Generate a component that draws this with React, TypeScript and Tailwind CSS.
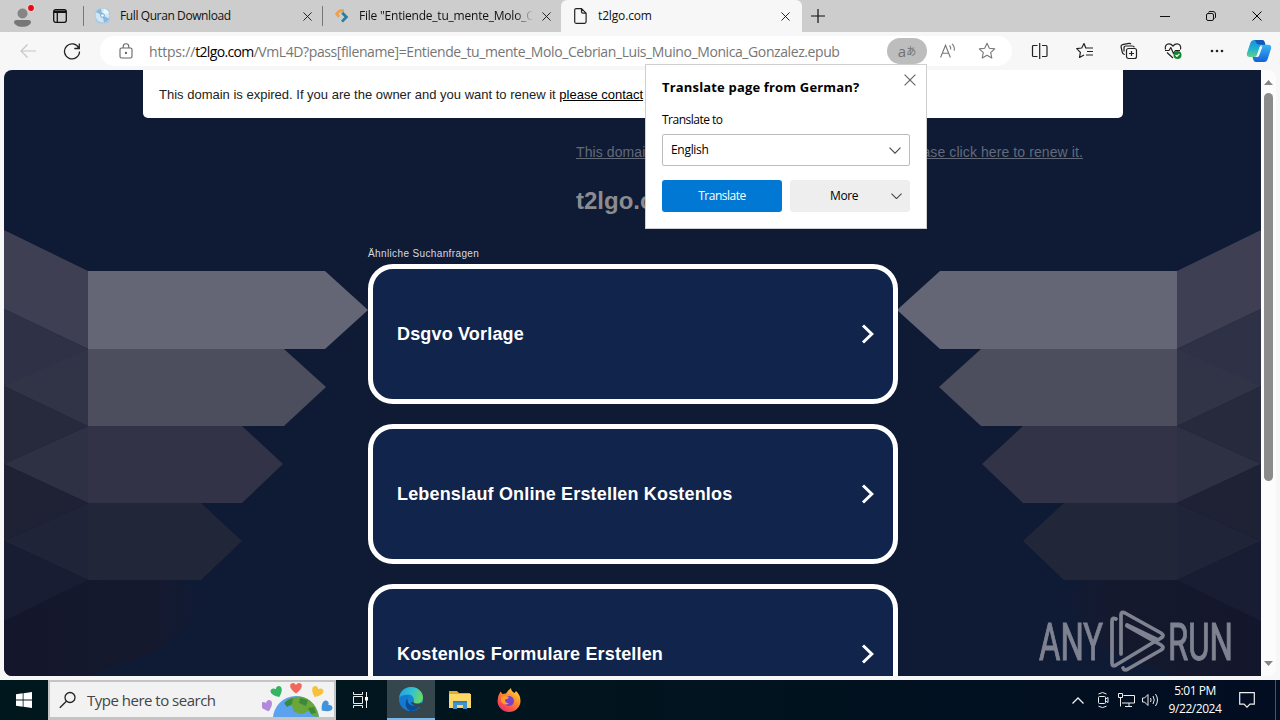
import type { ReactNode } from 'react'
import clsx from 'clsx'

const related = ['Dsgvo Vorlage', 'Lebenslauf Online Erstellen Kostenlos', 'Kostenlos Formulare Erstellen']

function CloseIcon({ size = 9, className }: { size?: number; className?: string }) {
  return (
    <svg width={size} height={size} viewBox="0 0 10 10" className={clsx('shrink-0', className)} fill="none" stroke="currentColor" strokeWidth="1">
      <path d="M.5.5l9 9M9.5.5l-9 9" />
    </svg>
  )
}

function ChevronDown({ width = 12 }: { width?: number }) {
  return (
    <svg width={width} height={width / 2 + 1} viewBox="0 0 12 7" fill="none" stroke="#444" strokeWidth="1.1" className="shrink-0">
      <path d="M.5.7 6 6.2 11.5.7" />
    </svg>
  )
}

function DiscIcon() {
  return (
    <svg width="16" height="16" viewBox="0 0 16 16" className="shrink-0">
      <rect x=".5" y=".5" width="14.5" height="15" rx="4.5" fill="#a9cbe2" />
      <circle cx="7.5" cy="7.5" r="6.8" fill="#cfe6f6" />
      <path d="M7.5 7.5 1 4a7 7 0 0 1 5-3.2zM7.5 7.5l6.500 3a7 7 0 0 1-5 4z" fill="#86b8e0" />
      <path d="M7.5 7.5 9 .8a7 7 0 0 1 5 4z" fill="#eef7fd" />
      <circle cx="7.5" cy="7.5" r="2.4" fill="#7fb2dc" />
      <circle cx="7.5" cy="7.5" r="1.2" fill="#fff" />
    </svg>
  )
}

function UploadIcon() {
  return (
    <svg width="14" height="14" viewBox="0 0 14 14" fill="none" strokeWidth="2.8" className="shrink-0">
      <path d="M5.5 12 2.500 9" stroke="#b9d5df" />
      <path d="M9 1.300 4.500 2 1.600 4.800l2.600 3" stroke="#f0a04b" />
      <path d="M7.200 3.800 11.400 8 7 12.600" stroke="#2b7f9c" />
    </svg>
  )
}

function TabBar() {
  return (
    <div className="flex h-8 shrink-0 items-center bg-[#cdcdcd] text-[12px] text-[#111]">
      <svg width="24" height="24" viewBox="0 0 24 24" className="ml-3 shrink-0">
        <circle cx="10.500" cy="9.500" r="5" fill="#858585" />
        <path d="M2 18q0-2 2.500-2h12q2.500 0 2.500 2c0 2.500-3.500 4.800-8.500 4.800S2 20.500 2 18z" fill="#777" />
        <circle cx="19" cy="4" r="3.700" fill="#f0d0d0" />
        <circle cx="19" cy="4" r="2.900" fill="#e30b17" />
      </svg>
      <svg width="14" height="14" viewBox="0 0 14 14" className="ml-[17px] shrink-0" fill="none" stroke="#111" strokeWidth="1.300">
        <rect x=".7" y=".7" width="12.600" height="12.600" rx="2" />
        <path d="M1 2.200h12M1 3.300h12" strokeWidth="1.600" />
        <path d="M4.300 3.500v9.500" />
      </svg>
      <div className="ml-4 h-5 w-px bg-[#777]" />
      <div className="flex w-[238px] items-center pl-[11px] pr-[10px]">
        <DiscIcon />
        <span className="ml-[9px] flex-1 whitespace-nowrap tracking-[-0.4px]">Full Quran Download</span>
        <CloseIcon />
      </div>
      <div className="h-5 w-px bg-[#777]" />
      <div className="flex w-[238px] items-center pl-[12px] pr-[10px]">
        <UploadIcon />
        <span className="ml-[10px] w-[174px] overflow-hidden whitespace-nowrap tracking-[-0.22px] [mask-image:linear-gradient(to_right,#000_90%,transparent)]">
          File &quot;Entiende_tu_mente_Molo_Cebrian
        </span>
        <CloseIcon className="ml-auto" />
      </div>
      <div className="flex h-8 w-[241px] items-center rounded-t-md bg-[#f7f7f7] pl-[13px] pr-[12px]">
        <svg width="13" height="16" viewBox="0 0 13 16" className="shrink-0" fill="none" stroke="#222" strokeWidth="1.200">
          <path d="M2.200.6h5.300l4.600 4.600v8.600q0 1.500-1.500 1.500H2.200Q.7 15.300.7 13.800V2.100Q.7.6 2.200.6zM7.500.6v3.200q0 1.400 1.400 1.400h3.200" />
        </svg>
        <span className="ml-[11px] flex-1 tracking-[-0.15px]">t2lgo.com</span>
        <CloseIcon />
      </div>
      <svg width="14" height="14" viewBox="0 0 14 14" className="ml-[9px] shrink-0" stroke="#111" strokeWidth="1.200">
        <path d="M7 0v14M0 7h14" />
      </svg>
      <div className="ml-auto flex items-center pr-[18px] text-black">
        <svg width="10" height="10" viewBox="0 0 10 10" stroke="#111">
          <path d="M0 5.500h10" />
        </svg>
        <svg width="10" height="10" viewBox="0 0 10 10" className="ml-[36px]" fill="none" stroke="#111">
          <rect x=".5" y="2.500" width="7" height="7" rx="1.500" />
          <path d="M2.500 1.500Q2.700.5 4 .5h3q2.500 0 2.500 2.500v3q0 1-1 1.500" />
        </svg>
        <CloseIcon size={10} className="ml-[36px]" />
      </div>
    </div>
  )
}

function AddressBar() {
  return (
    <div className="flex h-[30px] w-[912px] items-center rounded-full bg-white pl-[19px] pr-[16px]">
      <svg width="14" height="16" viewBox="0 0 14 16" fill="none" stroke="#666" strokeWidth="1.100" className="shrink-0">
        <rect x="1" y="5" width="12" height="10" rx="1.500" />
        <path d="M4.200 5V3.500a2.800 2.800 0 0 1 5.600 0V5" />
        <circle cx="7" cy="10" r=".6" fill="#555" />
      </svg>
      <span className="ml-[16px] flex-1 whitespace-nowrap text-[14px] tracking-[-0.41px] text-[#767676]">
        <span className="tracking-[-0.2px]">https://</span>
        <span className="tracking-[-0.65px] text-black">t2lgo.com</span>
        /VmL4D?pass[filename]=Entiende_tu_mente_Molo_Cebrian_Luis_Muino_Monica_Gonzalez.epub
      </span>
      <div className="flex h-[26px] w-10 items-center justify-center rounded-full bg-[#bdbdbd] text-[#707070]">
        <span className="text-[15px] leading-none">a</span>
        <span className="font-['Noto_Sans_CJK_JP',sans-serif] text-[10px] leading-none">あ</span>
      </div>
      <svg width="16" height="16" viewBox="0 0 16 16" fill="none" stroke="#777" className="ml-[13px]" strokeWidth="1.100">
        <path d="M.6 14.500 5.500 2.200l4.900 12.300M2.300 10.300h6.400M9.500 2.500q1.600 1.600 1.200 4M12 .8q3 2.800 2.200 6.800" />
      </svg>
      <svg width="18" height="18" viewBox="0 0 18 18" fill="none" stroke="#777" strokeWidth="1.100" className="ml-[22px]">
        <path d="m9 1.300 2.300 5 5.400.6-4 3.700 1.100 5.400L9 13.300 4.200 16l1.100-5.400-4-3.700 5.400-.6z" strokeLinejoin="round" />
      </svg>
    </div>
  )
}

function ToolbarIcon({ className, children }: { className?: string; children: ReactNode }) {
  return (
    <svg width="18" height="18" viewBox="0 0 18 18" fill="none" stroke="#222" strokeWidth="1.200" strokeLinejoin="round" className={clsx('shrink-0', className)}>
      {children}
    </svg>
  )
}

function Toolbar() {
  return (
    <div className="flex h-[38px] shrink-0 items-center bg-[#f7f7f7]">
      <svg width="16" height="14" viewBox="0 0 16 14" fill="none" stroke="#c6c6c6" strokeWidth="1.200" className="ml-5">
        <path d="M16 7H1M7.500.5 1 7l6.500 6.500" />
      </svg>
      <svg width="18" height="18" viewBox="0 0 18 18" fill="none" stroke="#222" strokeWidth="1.300" className="ml-[27px] mr-[19px]">
        <path d="M15.800 6.200A7.500 7.500 0 1 0 16.500 9.500M16.300 1.500v5H11.300" />
      </svg>
      <AddressBar />
      <ToolbarIcon className="ml-[19px]">
        <path d="M6.500 3.500h-4q-1 0-1 1v9q0 1 1 1h4M11 3.500h4q1 0 1 1v9q0 1-1 1h-4M8.700 1v16" />
      </ToolbarIcon>
      <ToolbarIcon className="ml-[27px]">
        <path d="M10.500 6.200 9.800 6 8 1.500 5.700 6l-5 .6 3.700 3.700L3.500 15.500 8 13M10.500 6H17M11 9.500h6M10 13h7" />
      </ToolbarIcon>
      <ToolbarIcon className="ml-[26px]">
        <rect x="6.500" y="6.500" width="10" height="10" rx="2" />
        <path d="M11.500 9v5M9 11.500h5M4.800 12.500 3.500 12Q2.500 11.300 2.200 10L1 4.500Q1 3 2.500 2.600L9 1.300q1.400-.1 1.900 1M4 9.500V6q0-2 2-2h6.500q1.500 0 1.800 1.300" />
      </ToolbarIcon>
      <ToolbarIcon className="ml-[26px]">
        <path d="M1.500 7.500C.5 4 2.500 1.800 5 1.800c2 0 3 1 4 2.200 1-1.200 2-2.200 4-2.200 2.500 0 4.500 2.200 3.500 5.700M3 10.500l6 5.500M1 8.500h4l1.800-3 2.700 6 2-3h4.500" />
        <circle cx="13.500" cy="13" r="4" fill="#13852b" stroke="none" />
        <path d="m11.600 13 1.300 1.300 2.500-2.500" stroke="#fff" />
      </ToolbarIcon>
      <svg width="14" height="4" viewBox="0 0 14 4" fill="#222" className="ml-[28px]">
        <circle cx="2" cy="2" r="1.300" />
        <circle cx="7" cy="2" r="1.300" />
        <circle cx="12" cy="2" r="1.300" />
      </svg>
      <svg width="26" height="24" viewBox="0 0 26 24" className="ml-[22px] shrink-0">
        <defs>
          <linearGradient id="copilotA" x1="0" y1="0" x2="0" y2="1">
            <stop offset="0" stopColor="#1790dc" />
            <stop offset=".5" stopColor="#1fb0d0" />
            <stop offset="1" stopColor="#5fd08a" />
          </linearGradient>
          <linearGradient id="copilotB" x1="0" y1="0" x2="0" y2="1">
            <stop offset="0" stopColor="#39b5f5" />
            <stop offset="1" stopColor="#1560d8" />
          </linearGradient>
        </defs>
        <path d="M8 1h8q2 0 2.600 2l.8 3h-3q-2 0-2.700 2.200l-2.700 8.100Q10.500 18 8 18H4Q0 18 1 14L4.500 3.500Q5.300 1 8 1z" fill="url(#copilotA)" />
        <path d="M18 23h-8q-2 0-2.600-2L6.500 18H9q2.200 0 3-2.300L14.700 8q.8-2.200 3.300-2.200h4q4 0 3 4L21.500 20.500Q20.700 23 18 23z" fill="url(#copilotB)" />
        <path d="M9 1h7q2 0 2.600 2l.8 2.800h-4.900L11 5z" fill="#1556bd" />
        <path d="M14 7.500h2.500l-3.500 9.500q-.5 1-2 1H9.500q1-.5 1.500-2z" fill="#f3fafc" />
      </svg>
    </div>
  )
}

function SignArrows() {
  return (
    <>
      <polygon points="0,160 84,201 84,279 0,239" fill="#3e3f52" />
      <polygon points="0,239 84,279 84,356 0,316" fill="#2f3246" />
      <polygon points="84,279 84,356 0,316" fill="#313347" />
      <polygon points="0,316 84,356 0,394" fill="#272a3d" />
      <polygon points="84,356 84,433 0,394" fill="#2e3044" />
      <polygon points="0,394 84,433 0,471" fill="#1f2135" />
      <polygon points="84,433 84,510 0,471" fill="#202439" />
      <polygon points="0,471 84,510 0,551" fill="#191d33" />
      <path d="M0 551 84 510H180L196 530 180 556 156 580 84 606H0z" fill="url(#signFade)" />
      <polygon points="84,201 321,201 364,240 321,279 84,279" fill="#656675" />
      <polygon points="84,279 280,279 322,317 280,356 84,356" fill="#4c4d5d" />
      <polygon points="84,356 238,356 279,394 238,433 84,433" fill="#323346" />
      <polygon points="84,433 197,433 238,471 197,510 84,510" fill="#222639" />
    </>
  )
}

function PageBackdrop() {
  return (
    <svg width="1257" height="606" viewBox="0 0 1257 606" className="col-start-1 row-start-1">
      <defs>
        <linearGradient id="signFade" x1="0" y1="0" x2="1" y2="0">
          <stop offset="0" stopColor="#14172b" />
          <stop offset=".75" stopColor="#15192e" />
          <stop offset="1" stopColor="#101b34" />
        </linearGradient>
      </defs>
      <SignArrows />
      <g transform="matrix(-1 0 0 1 1257 0)">
        <SignArrows />
      </g>
    </svg>
  )
}

function ResultCard({ label }: { label: string }) {
  return (
    <div className="flex h-[140px] shrink-0 items-center justify-between rounded-[25px] border-[5px] border-white bg-[#11244b] pl-6 pr-[18px]">
      <span className="text-[18px] font-bold tracking-[0.17px] text-white">{label}</span>
      <svg width="14" height="20" viewBox="0 0 14 20" fill="none" stroke="#fff" strokeWidth="3">
        <path d="m2 1.500 8.800 8.500L2 18.500" />
      </svg>
    </div>
  )
}

function ParkedPage() {
  return (
    <div className="grid h-[606px] w-[1257px] overflow-hidden rounded-l-lg bg-[#0f1b35] font-['Liberation_Sans',Arial,sans-serif]">
      <PageBackdrop />
      <div className="z-10 col-start-1 row-start-1 flex h-[606px] flex-col overflow-hidden">
        <div className="ml-[139px] flex h-12 w-[980px] shrink-0 items-center rounded-b-[5px] bg-white pl-4 pt-0.5 text-[13px] text-[#222]">
          <p className="whitespace-nowrap">
            This domain is expired. If you are the owner and you want to renew it <span className="text-black underline">please contact</span>
          </p>
        </div>
        <p className="ml-[572px] mt-[24px] h-5 whitespace-nowrap text-[14px] leading-5 tracking-[0.09px] text-[#626979] underline">
          This domain has expired. If you owned this domain, please click here to renew it.
        </p>
        <h1 className="ml-[572px] mt-[24px] h-[30px] text-[24px] font-bold leading-[30px] text-[#8b8c90]">t2lgo.com</h1>
        <div className="ml-[364px] mt-[31px] flex w-[530px] flex-col">
          <p className="h-[17px] text-[10px] leading-[13px] tracking-[0.37px] text-[#d6d9e0]">Ähnliche Suchanfragen</p>
          <div className="flex flex-col gap-5">
            {related.map((label) => (
              <ResultCard key={label} label={label} />
            ))}
          </div>
        </div>
      </div>
    </div>
  )
}

function Scrollbar() {
  return (
    <div className="flex h-[606px] w-[15px] flex-col items-center rounded-r-lg bg-[#fcfcfc]">
      <svg width="9" height="5" viewBox="0 0 9 5" className="mt-[10px]" fill="#858585">
        <path d="M4.500 0 9 5H0z" />
      </svg>
      <div className="mt-2 h-[388px] w-[9px] rounded-full bg-[#8b8b8b]" />
      <svg width="9" height="5" viewBox="0 0 9 5" className="mb-[10px] mt-auto" fill="#858585">
        <path d="M0 0h9L4.500 5z" />
      </svg>
    </div>
  )
}

function TranslatePopup() {
  return (
    <div className="absolute left-[645px] top-16 z-20 flex h-[165px] w-[282px] flex-col border border-[#cfcfcf] bg-white px-4 text-[12px] text-black">
      <div className="mt-[9px] flex h-[26px] items-center">
        <h2 className="flex-1 whitespace-nowrap pt-px text-[13px] font-bold tracking-[0.17px]">Translate page from German?</h2>
        <CloseIcon size={12} className="-mr-[6px] mb-[14px] text-[#666]" />
      </div>
      <label className="mt-[10px] h-[20px] leading-5 tracking-[-0.5px]">Translate to</label>
      <div className="mt-1 flex h-8 items-center justify-between rounded-[2px] border border-[#bcbcbc] pl-2 pr-2">
        <span className="tracking-[-0.3px]">English</span>
        <ChevronDown />
      </div>
      <div className="mt-[14px] flex gap-2">
        <button className="h-8 w-[120px] rounded-[3px] bg-[#0078d4] tracking-[-0.5px] text-white">Translate</button>
        <button className="flex h-8 w-[120px] items-center rounded-[3px] bg-[#eee] pl-10 pr-[8px]">
          <span className="flex-1 text-left tracking-[-0.4px]">More</span>
          <ChevronDown width={11} />
        </button>
      </div>
    </div>
  )
}

function Watermark() {
  return (
    <svg width="200" height="66" viewBox="0 0 200 66" className="absolute left-[1037px] top-[608px] z-20 opacity-90">
      <g fill="#8b8e9b" stroke="#8b8e9b" strokeWidth="1.100" fontFamily="Roboto, sans-serif" fontSize="51.500">
        <text x="2" y="51.500" textLength="64" lengthAdjust="spacingAndGlyphs">ANY</text>
        <text x="131" y="51.500" textLength="65" lengthAdjust="spacingAndGlyphs">RUN</text>
      </g>
      <g fill="none" stroke="#8b8e9b" strokeWidth="3.700" strokeLinecap="round" strokeLinejoin="round">
        <path d="M79 11q-4-2-4 2v42q0 4 4 2l38-23M84 46V7q0-4 4-2l36 20q4 3 0 5l-3 2-31-15" />
        <path d="M90 18l34 19q4 3 0 5L91 61q-4 2-5-1" />
      </g>
    </svg>
  )
}

function Heart({ x, y, fill, rotate = 0 }: { x: number; y: number; fill: string; rotate?: number }) {
  return <path d="M0 5.500C-8 0-6.500-5-3-5Q-1-5 0-3 1-5 3-5C6.500-5 8 0 0 5.500z" fill={fill} transform={`translate(${x} ${y}) rotate(${rotate})`} />
}

function SearchBox() {
  return (
    <div className="flex h-10 w-72 items-center border-2 border-b-[3px] border-[#c4c4c4] bg-[#f2f2f2] pl-[9px]">
      <svg width="18" height="18" viewBox="0 0 18 18" fill="none" stroke="#222" strokeWidth="1.300">
        <circle cx="11" cy="6.500" r="5" />
        <path d="M7.400 10.200.8 16.800" />
      </svg>
      <span className="ml-[10px] whitespace-nowrap pt-0.5 text-[15px] tracking-[-0.5px] text-[#444]">Type here to search</span>
      <svg width="72" height="36" viewBox="0 0 72 36" className="ml-auto shrink-0 self-end">
        <circle cx="34" cy="38" r="23" fill="#5ca2ee" />
        <path d="M24 20q8-6 17-4 9 3 13 11l3 9-6-1-4-5-7 3-8-2-2-6-7-1z" fill="#6aa63a" />
        <path d="M22 22q4-4 9-5l-1 6-5 3zM38 17l8 2-2 6-7-3zM46 27l6-1 2 6-5 1z" fill="#3b8a3c" />
        <Heart x={34} y={7} fill="#f2685c" />
        <Heart x={15} y={11} fill="#36b45f" rotate={-25} />
        <Heart x={55} y={11} fill="#f7c13a" rotate={25} />
        <Heart x={5} y={25} fill="#b389dc" rotate={-20} />
        <Heart x={64} y={26} fill="#3f94dc" rotate={50} />
      </svg>
    </div>
  )
}

function EdgeLogo() {
  return (
    <svg width="24" height="24" viewBox="0 0 24 24">
      <defs>
        <linearGradient id="edgeTop" x1="0" y1="0" x2="1" y2=".3">
          <stop offset="0" stopColor="#1b9de2" />
          <stop offset=".6" stopColor="#35c4cf" />
          <stop offset="1" stopColor="#6ad66a" />
        </linearGradient>
      </defs>
      <circle cx="12" cy="12" r="12" fill="#1583d8" />
      <path d="M.3 10C1.500 3.500 6.500 0 12 0c7 0 12 5 12 10.500 0 4-3 6-6 6-2.500 0-4-1-3.500-2.300C16 11 13 7.500 9 7.500 5 7.500 1.500 9 .3 10z" fill="url(#edgeTop)" />
      <path d="M8.500 11c-2 4 0 11 7 12.500C8 26-1 19 .8 12 2 8 8 7.500 11 9.500 9.800 9.500 9 10 8.500 11z" fill="#147ad0" />
      <path d="M8.800 11.500C7.500 17 13 21 22 17.500 18 24 12 24.500 10.500 23.500 6 21 5.500 14.500 8.800 11.500z" fill="#0c4c96" />
      <path d="M14.500 14.200q-.8 2.300 3.500 2.500 3 0 4.300-1L24 18l-2.500 2-6-1-3.800-3z" fill="#37464e" />
    </svg>
  )
}

function Taskbar() {
  return (
    <div className="flex h-10 shrink-0 items-center bg-gradient-to-r from-[#00181d] via-[#01141e] to-[#020d22] text-white">
      <div className="flex w-12 justify-center">
        <svg width="16" height="16" viewBox="0 0 16 16" fill="#fff">
          <path d="M0 2.200 6.700 1.300v6.300H0zM7.500 1.200 16 0v7.600H7.500zM0 8.400h6.700v6.300L0 13.800zM7.500 8.400H16V16l-8.500-1.200z" />
        </svg>
      </div>
      <SearchBox />
      <div className="flex w-[51px] justify-center">
        <svg width="17" height="16" viewBox="0 0 17 16" fill="none" stroke="#eee" className="-ml-0.5">
          <path d="M1.500 0v2.500h9V0M1.500 16v-2.500h9V16M1.500 4.500h9v7h-9zM14.500 0v16" />
          <path d="M13 5h3v3.500h-3z" fill="#fff" stroke="none" />
        </svg>
      </div>
      <div className="flex h-10 w-12 items-center justify-center border-b-2 border-[#76b9ed] bg-[#35474d]">
        <EdgeLogo />
      </div>
      <div className="flex w-[50px] justify-center">
        <svg width="22" height="20" viewBox="0 0 22 20">
          <path d="M0 1h8l2 2h11v15H0z" fill="#e6a92e" />
          <path d="M0 4h22v14H0z" fill="#fbd868" />
          <path d="M4 11h14v8h-4v-4H8v4H4z" fill="#4292cf" />
          <path d="M4 11h14v1.500H4z" fill="#2f7fc0" />
        </svg>
      </div>
      <div className="flex w-12 justify-center">
        <svg width="24" height="24" viewBox="0 0 24 24">
          <defs>
            <linearGradient id="fox" x1=".9" y1="0" x2=".2" y2="1">
              <stop offset="0" stopColor="#ffe23f" />
              <stop offset=".45" stopColor="#ff8a2a" />
              <stop offset="1" stopColor="#f0246c" />
            </linearGradient>
          </defs>
          <path d="M3.500 3.500 5.500 6 9 5.500Q11 2.500 14 0q0 3 3.500 5l1.500-2q4.500 4 4.500 10A11.500 11 0 0 1 .5 13Q.5 8 3.500 3.500z" fill="url(#fox)" />
          <circle cx="12" cy="13" r="5" fill="#7a42c8" />
          <path d="M4 9q4-2 8 0-1 2.500-4 2.500 0 3.500 4 4-5 2.500-8-2z" fill="#ff9a2c" />
        </svg>
      </div>
      <div className="ml-auto flex h-10 items-center">
        <svg width="12" height="7" viewBox="0 0 12 7" fill="none" stroke="#eee" strokeWidth="1.300">
          <path d="m.5 6.500 5.500-5.500 5.500 5.500" />
        </svg>
        <svg width="14" height="18" viewBox="0 0 14 18" fill="none" stroke="#eee" className="ml-3">
          <rect x="2.500" y="5.500" width="7" height="7" rx="1" />
          <path d="M9.500 8l2.500-1.500v5L9.500 10M2.500 3Q6.500 0 10.500 3M2.500 15.200Q6.500 18 10.500 15.200" />
        </svg>
        <svg width="17" height="14" viewBox="0 0 17 14" fill="none" stroke="#eee" className="ml-[8px]">
          <path d="M5.500 2.500h11v7.500H4M11 10v3M7 13.500h7M.5.500h4v4h-4zM2.500 4.500v9" />
        </svg>
        <svg width="17" height="14" viewBox="0 0 17 14" fill="none" stroke="#eee" className="ml-[7px]">
          <path d="M.5 5h2L6 1.500v11L2.500 9h-2zM8.500 5q1.200 2 0 4M11 3q2.500 4 0 8M13.500 1q4 6 0 12" />
        </svg>
        <div className="ml-[9px] w-[54px] text-center text-[12px] leading-[18px] tracking-[-0.45px]">
          <div>5:01 PM</div>
          <div>9/22/2024</div>
        </div>
        <svg width="16" height="16" viewBox="0 0 16 16" fill="none" stroke="#eee" className="ml-[17px]" strokeWidth="1.200">
          <path d="M.7.7h14.600v11.500H11L8 15.200 5 12.200H.7z" />
        </svg>
        <div className="ml-5 mr-[4px] h-10 w-px bg-[#4a5563]" />
      </div>
    </div>
  )
}

export default function App() {
  return (
    <div className="relative flex h-[720px] w-[1280px] flex-col overflow-hidden bg-[#f7f7f7] font-['Open_Sans','Noto_Sans',sans-serif]">
      <TabBar />
      <Toolbar />
      <main className="flex h-[610px] shrink-0 pl-1">
        <ParkedPage />
        <Scrollbar />
      </main>
      <Taskbar />
      <TranslatePopup />
      <Watermark />
    </div>
  )
}
